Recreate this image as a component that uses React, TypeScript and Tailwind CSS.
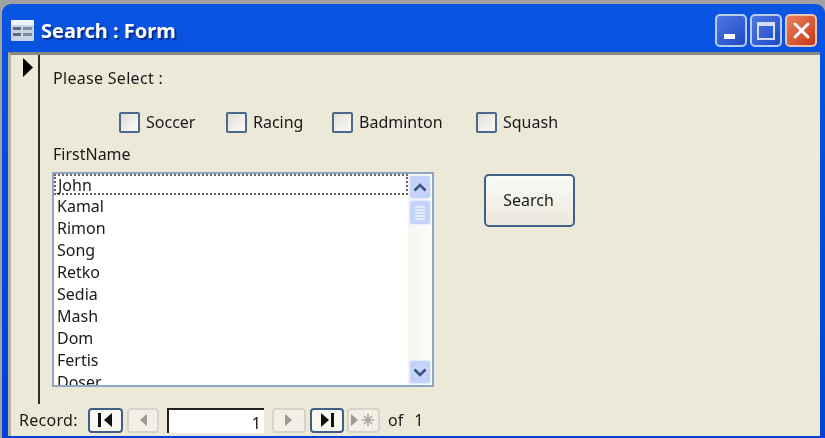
const names = ["John","Kamal","Rimon","Song","Retko","Sedia","Mash","Dom","Fertis","Doser"];
const font = { fontFamily: '"Noto Sans", sans-serif' };

function Check({ label, w }: { label: string; w: string }) {
  return (
    <div className={`flex items-center gap-[6px] ${w}`}>
      <div className="w-[21px] h-[21px] rounded-[2px] border-2 border-[#48688c] bg-gradient-to-br from-[#e0ded6] to-[#fbfbf8]" />
      <span>{label}</span>
    </div>
  );
}

function NavBtn({ children, active, w = "w-[35px]" }: { children: React.ReactNode; active?: boolean; w?: string }) {
  return (
    <div className={`${w} h-[25px] flex items-center justify-center rounded-[4px] border-2 ${active ? "border-[#3f5f84] bg-[#f8f7f2]" : "border-[#d8d5c8] bg-[#f1efe6]"}`}>
      {children}
    </div>
  );
}

export default function App() {
  return (
    <div className="w-[825px] h-[438px] overflow-hidden bg-[#a2a2a2] pt-[4px] pl-[2px] blur-[0.4px]">
      <div className="h-[434px] flex flex-col rounded-t-[9px] bg-gradient-to-b from-[#0a55e2] via-[#0349dc] to-[#0342d6] pl-[6px] pr-[5px] pb-[3px]">
        <div className="h-[48px] shrink-0 flex items-center justify-between">
          <div className="flex items-center gap-[7px] ml-[3px] pt-[6px]">
            <svg width="23" height="21" viewBox="0 0 23 21" className="-mt-[2px]">
              <rect x="0" y="0" width="23" height="21" rx="1" fill="#c9d3e3" />
              <rect x="0" y="0" width="23" height="5" fill="#eef3fb" />
              <rect x="2" y="7" width="8" height="3" fill="#5a6b85" />
              <rect x="12" y="7" width="9" height="3" fill="#7f8da3" />
              <rect x="2" y="13" width="8" height="3" fill="#5a6b85" />
              <rect x="12" y="13" width="9" height="3" fill="#7f8da3" />
            </svg>
            <span className="text-white font-bold text-[20px] leading-none [text-shadow:2px_2px_1px_#0a2f8f]" style={font}>Search : Form</span>
          </div>
          <div className="flex items-center gap-[3px] pt-[5px] pr-[3px]">
            <div className="w-[32px] h-[33px] rounded-[5px] border-2 border-[#b9cdf3] bg-gradient-to-br from-[#5078e0] to-[#1f48c8] flex items-end pl-[7px] pb-[6px]">
              <div className="w-[11px] h-[5px] bg-white" />
            </div>
            <div className="w-[32px] h-[33px] rounded-[5px] border-2 border-[#b9cdf3] bg-gradient-to-br from-[#5078e0] to-[#1f48c8] flex items-center justify-center">
              <div className="w-[18px] h-[18px] border-2 border-t-[4px] border-[#d5e0f8]" />
            </div>
            <div className="w-[32px] h-[33px] rounded-[5px] border-2 border-[#eec2b0] bg-gradient-to-br from-[#e8805c] to-[#c8340e] flex items-center justify-center">
              <svg width="19" height="19" viewBox="0 0 19 19"><path d="M3 3 L16 16 M16 3 L3 16" stroke="#fff" strokeWidth="3" strokeLinecap="round" /></svg>
            </div>
          </div>
        </div>
        <div className="flex-1 flex flex-col bg-[#ece9d8] border-t-[3px] border-l-[3px] border-[#8c8a80] border-l-[#b4b2a4] text-[16px] text-[#1a1a1a] leading-none" style={font}>
          <div className="flex-1 flex min-h-0">
            <div className="w-[29px] h-[349px] shrink-0 border-r-2 border-[#2e2c24] pl-[12px] pt-[3px]">
              <svg width="10" height="19" viewBox="0 0 10 19"><path d="M0 0 L10 9.5 L0 19 Z" fill="#000" /></svg>
            </div>
            <div className="flex-1 pl-[13px] pt-[13px]">
              <div className="h-[20px] flex items-center tracking-[0.3px]">Please Select :</div>
              <div className="flex mt-[23px] ml-[66px] h-[22px] items-center">
                <Check label="Soccer" w="w-[107px]" />
                <Check label="Racing" w="w-[106px]" />
                <Check label="Badminton" w="w-[144px]" />
                <Check label="Squash" w="w-auto" />
              </div>
              <div className="mt-[11px] h-[20px] flex items-center">FirstName</div>
              <div className="flex mt-[8px] -ml-[1px]">
                <div className="w-[382px] h-[215px] bg-white border-2 border-[#8fa4bd] flex overflow-hidden">
                  <div className="flex-1 pl-[2px] overflow-hidden">
                    {names.map((n, i) => (
                      <div key={n} className={`flex items-center pl-[1px] ${i === 0 ? "h-[21px] border-y-2 border-x-2 border-dotted border-[#666] -ml-[2px] pl-[2px]" : "h-[22px]"}`}>{n}</div>
                    ))}
                  </div>
                  <div className="w-[24px] shrink-0 flex flex-col items-center justify-between bg-gradient-to-r from-[#f5f4ee] to-[#fdfdfa] py-[1px]">
                    <div className="w-full">
                      <div className="h-[24px] mx-[1px] rounded-[3px] bg-[#c3d3fb] border border-[#e6edfc] flex items-center justify-center">
                        <svg width="14" height="9" viewBox="0 0 14 9"><path d="M1.5 7.5 L7 2 L12.5 7.5" fill="none" stroke="#3c5480" strokeWidth="2.6" /></svg>
                      </div>
                      <div className="h-[25px] mx-[1px] mt-[1px] rounded-[3px] bg-[#c3d3fb] border border-[#e6edfc] flex flex-col items-center justify-center gap-[1px]">
                        {[0, 1, 2, 3, 4].map((k) => <div key={k} className="w-[10px] h-[2px] bg-[#e4ebfd]" />)}
                      </div>
                    </div>
                    <div className="h-[24px] w-[22px] mx-[1px] rounded-[3px] bg-[#c3d3fb] border border-[#e6edfc] flex items-center justify-center">
                      <svg width="14" height="9" viewBox="0 0 14 9"><path d="M1.5 1.5 L7 7 L12.5 1.5" fill="none" stroke="#3c5480" strokeWidth="2.6" /></svg>
                    </div>
                  </div>
                </div>
                <div className="ml-[50px] mt-[2px] w-[91px] h-[53px] rounded-[5px] border-2 border-[#3f6184] bg-gradient-to-b from-[#fbfbf7] to-[#ebe8dc] flex items-center justify-center pb-[2px] pr-[2px]">Search</div>
              </div>
            </div>
          </div>
          <div className="h-[32px] shrink-0 flex items-center pl-[8px]">
            <span className="w-[69px] tracking-[0.3px]">Record:</span>
            <NavBtn active>
              <svg width="20" height="16" viewBox="0 0 20 16"><rect x="2" y="1" width="3" height="14" fill="#111" /><path d="M16 1 L8 8 L16 15 Z" fill="#111" /></svg>
            </NavBtn>
            <div className="w-[4px]" />
            <NavBtn w="w-[32px]">
              <svg width="12" height="16" viewBox="0 0 12 16"><path d="M10 2 L3 8 L10 14 Z" fill="#9a9a90" /></svg>
            </NavBtn>
            <div className="w-[8px]" />
            <div className="w-[97px] h-[25px] bg-white border-t-2 border-l-2 border-[#222] text-right pr-[3px] pt-[5px]">1</div>
            <div className="w-[8px]" />
            <NavBtn w="w-[34px]">
              <svg width="12" height="16" viewBox="0 0 12 16"><path d="M2 2 L9 8 L2 14 Z" fill="#9a9a90" /></svg>
            </NavBtn>
            <div className="w-[4px]" />
            <NavBtn active w="w-[34px]">
              <svg width="20" height="16" viewBox="0 0 20 16"><path d="M4 1 L12 8 L4 15 Z" fill="#111" /><rect x="14" y="1" width="3" height="14" fill="#111" /></svg>
            </NavBtn>
            <div className="w-[3px]" />
            <NavBtn w="w-[33px]">
              <svg width="28" height="16" viewBox="0 0 28 16"><path d="M1 2 L8 8 L1 14 Z" fill="#9a9a90" /><path d="M18 2 V14 M12 8 H24 M14 4 L22 12 M22 4 L14 12" stroke="#aaa89c" strokeWidth="1.6" /></svg>
            </NavBtn>
            <span className="ml-[8px]">of</span>
            <span className="ml-[11px]">1</span>
          </div>
        </div>
      </div>
    </div>
  );
}
